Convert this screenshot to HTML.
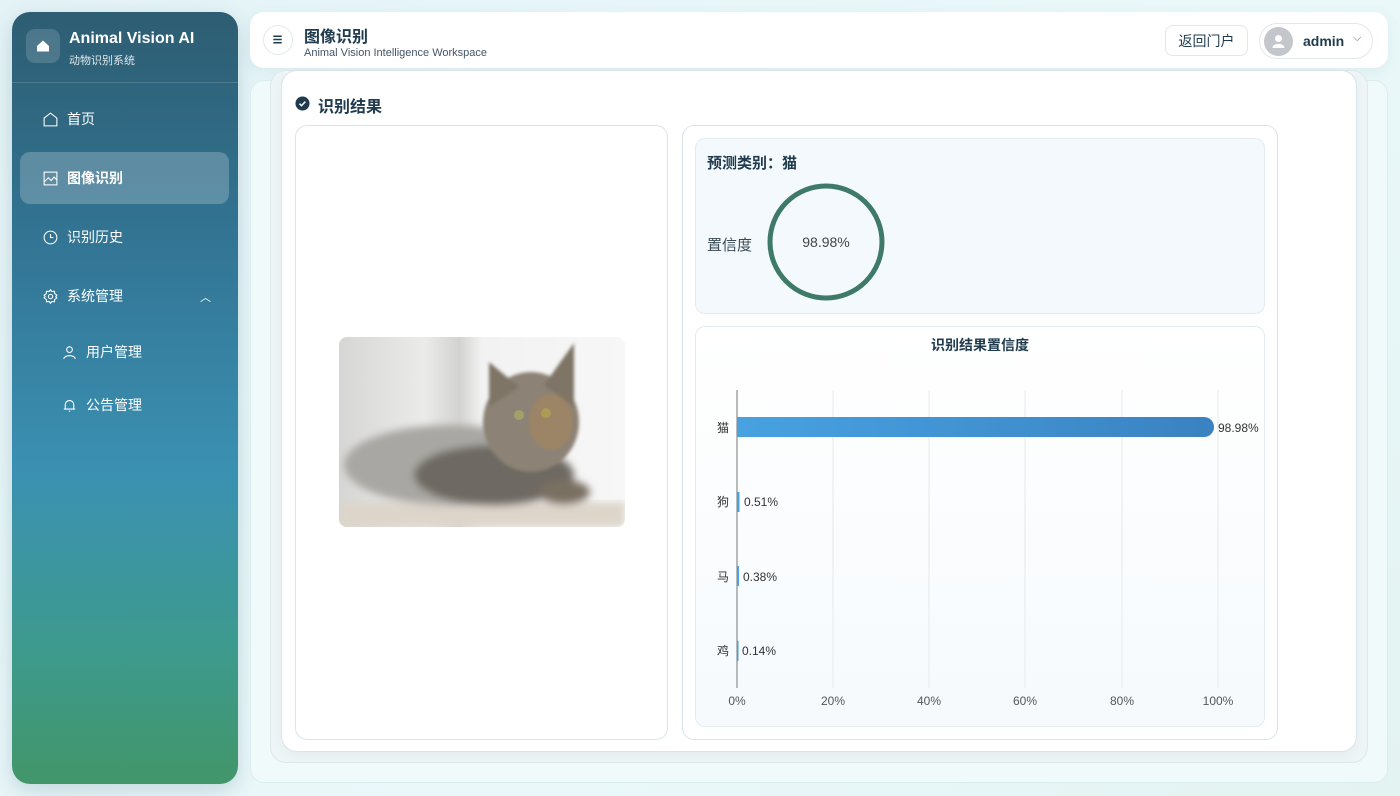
<!DOCTYPE html>
<html><head><meta charset="utf-8"><style>
*{box-sizing:border-box;margin:0;padding:0}
body{width:1400px;height:796px;overflow:hidden;background:linear-gradient(135deg,#e4f3f6,#eaf8fa 60%,#e3f3f1);font-family:"Liberation Sans","Noto Sans CJK SC",sans-serif;position:relative;color:#1f3b4d}
.side{position:absolute;left:12px;top:12px;width:226px;height:772px;border-radius:18px;background:linear-gradient(180deg,#2d5d72 0%,#34799a 35%,#3b91b2 60%,#3d9a8e 82%,#42966a 100%);box-shadow:0 6px 20px rgba(40,90,110,.2);color:#fff}
.logo{position:absolute;left:14px;top:17px;width:34px;height:34px;border-radius:9px;background:rgba(255,255,255,.15)}
.side .t1{position:absolute;left:57px;top:18px;font-size:16px;font-weight:bold}
.side .t2{position:absolute;left:57px;top:40px;font-size:11px;opacity:.85}
.div{position:absolute;left:0;right:0;top:70px;height:1px;background:rgba(255,255,255,.15)}
.item{position:absolute;left:30px;font-size:14px;display:flex;align-items:center;gap:8px}
.item svg{width:17px;height:17px;fill:none;stroke:#fff;stroke-width:1.5}
.active{position:absolute;left:8px;top:140px;width:209px;height:52px;border-radius:10px;background:rgba(255,255,255,.22)}
.hdr{position:absolute;left:250px;top:12px;width:1138px;height:56px;background:#fff;border-radius:14px;box-shadow:0 4px 14px rgba(60,120,140,.08)}
.menu{position:absolute;left:13px;top:13px;width:30px;height:30px;border-radius:50%;border:1px solid #e1eaec}
.btn{position:absolute;left:915px;top:13px;width:83px;height:31px;border:1px solid #e1e8ea;border-radius:8px;font-size:14px;text-align:center;line-height:30px;color:#1f3b4d}
.user{position:absolute;left:1009px;top:11px;width:114px;height:36px;border:1px solid #e1e8ea;border-radius:18px}
.outer{position:absolute;left:250px;top:80px;width:1138px;height:703px;border-radius:14px;background:#f1fafa;border:1px solid #dcecee}
.mid{position:absolute;left:270px;top:70px;width:1098px;height:693px;border-radius:16px;background:#eef5f7;border:1px solid #dde8eb}
.card{position:absolute;left:281px;top:70px;width:1076px;height:682px;border-radius:16px;background:#fff;border:1px solid #d9e6e9;box-shadow:0 4px 12px rgba(0,0,0,.04)}
.panel{position:absolute;border:1px solid #d7e6ea;border-radius:12px;background:#fff}
.sub{position:absolute;border:1px solid #e2ecef;border-radius:10px}
</style></head><body>
<div class="side">
 <div class="logo"><svg viewBox="0 0 34 34" width="34" height="34"><path d="M11 17 L17 11.5 L23 17 V22.5 H11 Z" fill="#fff"/></svg></div>
 <div class="t1">Animal Vision AI</div>
 <div class="t2">动物识别系统</div>
 <div class="div"></div>
 <div class="item" style="top:97px"><svg viewBox="0 0 24 24"><path d="M3 10 L12 3 L21 10 V21 H3 Z"/></svg>首页</div>
 <div class="active"></div>
 <div class="item" style="top:156px;font-weight:bold"><svg viewBox="0 0 24 24"><rect x="3" y="3" width="18" height="18"/><path d="M3 17 L9 11 L13 15 L17 10 L21 14"/></svg>图像识别</div>
 <div class="item" style="top:215px"><svg viewBox="0 0 24 24"><circle cx="12" cy="12" r="9"/><path d="M12 7 V12 H16"/></svg>识别历史</div>
 <div class="item" style="top:274px"><svg viewBox="0 0 24 24"><circle cx="12" cy="12" r="3"/><path d="M12 2.5 L14 5 L17.5 4.5 L18 8 L21 10 L19.5 12 L21 14 L18 16 L17.5 19.5 L14 19 L12 21.5 L10 19 L6.5 19.5 L6 16 L3 14 L4.5 12 L3 10 L6 8 L6.5 4.5 L10 5 Z"/></svg>系统管理</div>
 <div style="position:absolute;left:188px;top:277px;font-size:11px">︿</div>
 <div class="item" style="top:330px;left:49px"><svg viewBox="0 0 24 24"><circle cx="12" cy="8" r="4"/><path d="M4 21 C4 15 20 15 20 21"/></svg>用户管理</div>
 <div class="item" style="top:383px;left:49px"><svg viewBox="0 0 24 24"><path d="M6 17 V11 C6 7 9 5 12 5 C15 5 18 7 18 11 V17 H20 H4 Z"/><path d="M11 20 H13"/></svg>公告管理</div>
</div>
<div class="hdr">
 <div class="menu"><svg viewBox="0 0 30 30" width="28" height="28"><path d="M10 11 H19 M10 14.5 H19 M10 18 H19" stroke="#1f3b4d" stroke-width="1.6"/></svg></div>
 <div style="position:absolute;left:54px;top:11px;font-size:16px;font-weight:bold">图像识别</div>
 <div style="position:absolute;left:54px;top:35px;font-size:11px;color:#456">Animal Vision Intelligence Workspace</div>
 <div class="btn">返回门户</div>
 <div class="user"><div style="position:absolute;left:4px;top:3px;width:29px;height:29px;border-radius:50%;background:#c3c6cb"><svg viewBox="0 0 29 29" width="29" height="29"><circle cx="14.5" cy="11.5" r="3.5" fill="#fff"/><path d="M8.5 21 C8.5 15.5 20.5 15.5 20.5 21 Z" fill="#fff"/></svg></div><div style="position:absolute;left:43px;top:9px;font-size:14px;font-weight:bold">admin</div><div style="position:absolute;left:93px;top:8px;font-size:11px;color:#666">⌵</div></div>
</div>
<div class="outer"></div>
<div class="mid"></div>
<div class="card">
 <svg style="position:absolute;left:13px;top:25px" width="15" height="15" viewBox="0 0 16 16"><circle cx="8" cy="8" r="7.5" fill="#1f3b4d"/><path d="M4.8 8.2 L7 10.3 L11 6" stroke="#fff" stroke-width="1.6" fill="none"/></svg>
 <div style="position:absolute;left:36px;top:22px;font-size:16px;font-weight:bold">识别结果</div>
</div>
<div class="panel" style="left:295px;top:125px;width:373px;height:615px">
 <div style="position:absolute;left:43px;top:211px;width:286px;height:190px;border-radius:8px;overflow:hidden;background:linear-gradient(90deg,#d6d6d4,#ebebea 30%,#d2d2d0 42%,#f2f2f2 50%,#f7f7f7)">
  <svg width="286" height="190" viewBox="0 0 286 190"><defs><filter id="b"><feGaussianBlur stdDeviation="4"/></filter><filter id="c"><feGaussianBlur stdDeviation="1.5"/></filter></defs>
  <rect x="0" y="165" width="286" height="25" fill="#ddd5ca" filter="url(#b)"/>
  <g filter="url(#b)">
  <ellipse cx="110" cy="128" rx="105" ry="40" fill="#a9a7a3"/>
  <ellipse cx="155" cy="138" rx="80" ry="30" fill="#6e6962"/>
  <ellipse cx="225" cy="155" rx="26" ry="12" fill="#7a6f62"/>
  </g>
  <g filter="url(#c)">
  <ellipse cx="192" cy="85" rx="48" ry="50" fill="#8c8275"/>
  <path d="M150 70 L150 25 L180 50 Z M205 48 L235 6 L235 70 Z" fill="#7f7466"/>
  <ellipse cx="212" cy="85" rx="22" ry="28" fill="#9c8466"/>
  </g>
  <circle cx="180" cy="78" r="5" fill="#a4a06a"/><circle cx="207" cy="76" r="5" fill="#ad9b54"/>
  </svg>
 </div>
</div>
<div class="panel" style="left:682px;top:125px;width:596px;height:615px"></div>
<div class="sub" style="left:695px;top:138px;width:570px;height:176px;background:#f3f9fc">
 <div style="position:absolute;left:11px;top:13px;font-size:15px;font-weight:bold">预测类别：猫</div>
 <div style="position:absolute;left:11px;top:95px;font-size:15px;color:#3a4a55">置信度</div>
 <svg style="position:absolute;left:70px;top:44px" width="120" height="120"><circle cx="60" cy="59" r="56" fill="none" stroke="#3f7a68" stroke-width="5"/><text x="60" y="64" text-anchor="middle" font-size="14" fill="#444" font-family="Liberation Sans">98.98%</text></svg>
</div>
<div class="sub" style="left:695px;top:326px;width:570px;height:401px;background:linear-gradient(180deg,#fff,#f6fafd)">
 <div style="position:absolute;left:0;right:0;top:8px;text-align:center;font-size:14px;font-weight:bold">识别结果置信度</div>
</div>
<svg style="position:absolute;left:0;top:0" width="1400" height="796">
 <g stroke="#e6e9ee"><line x1="833" y1="390" x2="833" y2="688"/><line x1="929" y1="390" x2="929" y2="688"/><line x1="1025" y1="390" x2="1025" y2="688"/><line x1="1122" y1="390" x2="1122" y2="688"/><line x1="1218" y1="390" x2="1218" y2="688"/></g>
 <line x1="737" y1="390" x2="737" y2="688" stroke="#777"/>
 <defs><linearGradient id="g" x1="0" x2="1"><stop offset="0" stop-color="#48a2e0"/><stop offset="1" stop-color="#3a82c2"/></linearGradient></defs>
 <path d="M737 417 H1204 A10 10 0 0 1 1204 437 H737 Z" fill="url(#g)"/>
 <rect x="737" y="492" width="2.5" height="20" fill="#48a2e0"/><rect x="737" y="566" width="2" height="20" fill="#48a2e0"/><rect x="737" y="641" width="1.5" height="20" fill="#48a2e0"/>
 <g font-family="Liberation Sans,Noto Sans CJK SC,sans-serif" font-size="12" fill="#333">
 <text x="1218" y="432">98.98%</text><text x="744" y="506">0.51%</text><text x="743" y="581">0.38%</text><text x="742" y="655">0.14%</text>
 <text x="729" y="432" text-anchor="end">猫</text><text x="729" y="506" text-anchor="end">狗</text><text x="729" y="581" text-anchor="end">马</text><text x="729" y="655" text-anchor="end">鸡</text>
 <g text-anchor="middle" fill="#555"><text x="737" y="705">0%</text><text x="833" y="705">20%</text><text x="929" y="705">40%</text><text x="1025" y="705">60%</text><text x="1122" y="705">80%</text><text x="1218" y="705">100%</text></g>
 </g>
</svg>
</body></html>
